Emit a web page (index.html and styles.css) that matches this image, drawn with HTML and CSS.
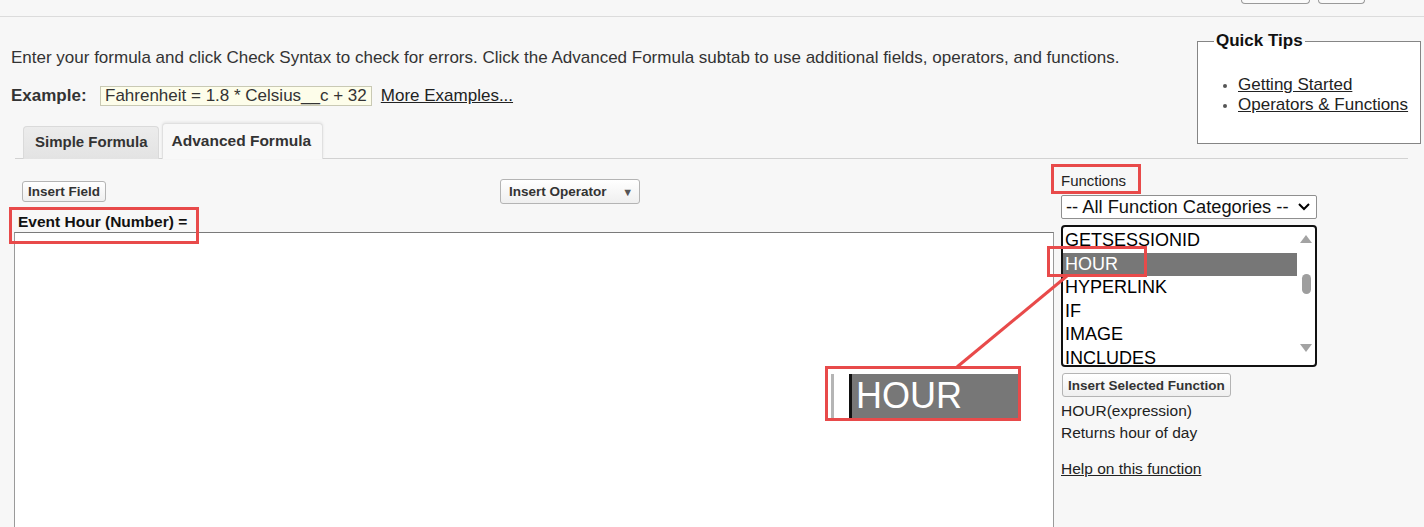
FILE: index.html
```html
<!DOCTYPE html>
<html>
  <head>
    <meta charset="UTF-8" />
    <title>Formula Editor</title>
    <link rel="stylesheet" href="styles.css">
  </head>
  <body>
    <div class="topbar">
      <span class="stub stub-wide"></span>
      <span class="stub stub-narrow"></span>
    </div>

    <div class="intro">
      <div class="intro-text">
        <p class="help">Enter your formula and click Check Syntax to check for errors. Click the Advanced Formula subtab to use additional fields, operators, and functions.</p>
        <div class="example">
          <span class="example-label">Example:</span>
          <span class="example-box">Fahrenheit = 1.8 * Celsius__c + 32</span>
          <a href="#" class="link">More Examples...</a>
        </div>
      </div>
      <fieldset class="tips">
        <legend>Quick Tips</legend>
        <ul>
          <li><a href="#" class="link">Getting Started</a></li>
          <li><a href="#" class="link">Operators &amp; Functions</a></li>
        </ul>
      </fieldset>
    </div>

    <div class="tabs">
      <div class="tab">Simple Formula</div>
      <div class="tab tab-active">Advanced Formula</div>
    </div>

    <div class="editor">
      <div class="editor-main">
        <div class="toolbar">
          <button class="btn btn-small">Insert Field</button>
          <button class="btn btn-operator">Insert Operator <span class="caret">&#9660;</span></button>
        </div>
        <div class="field-label">Event Hour (Number) =</div>
        <div class="formula-area"></div>
      </div>

      <div class="functions">
        <div class="functions-title">Functions</div>
        <div class="select">
          <span>-- All Function Categories --</span>
          <svg width="14" height="10" viewBox="0 0 14 10"><path d="M2 2 L7 7 L12 2" fill="none" stroke="#000" stroke-width="2"/></svg>
        </div>
        <div class="listbox">
          <ul class="options">
            <li>GETSESSIONID</li>
            <li class="selected">HOUR</li>
            <li>HYPERLINK</li>
            <li>IF</li>
            <li>IMAGE</li>
            <li>INCLUDES</li>
          </ul>
          <div class="scrollbar">
            <svg width="12" height="8" viewBox="0 0 12 8"><path d="M6 0 L12 8 L0 8 Z" fill="#a3a3a3"/></svg>
            <span class="thumb"></span>
            <svg width="12" height="8" viewBox="0 0 12 8"><path d="M0 0 L12 0 L6 8 Z" fill="#a3a3a3"/></svg>
          </div>
        </div>
        <button class="btn btn-insert">Insert Selected Function</button>
        <div class="fn-desc fn-first">HOUR(expression)</div>
        <div class="fn-desc">Returns hour of day</div>
        <a href="#" class="link fn-help">Help on this function</a>
      </div>
    </div>

    <!-- annotation overlay -->
    <div class="mark mark-label"></div>
    <div class="mark mark-functions"></div>
    <div class="mark mark-hour"></div>
    <svg class="connector" width="1424" height="527">
      <line x1="1067" y1="276" x2="957" y2="367" stroke="#e84a4a" stroke-width="3"/>
    </svg>
    <div class="callout">
      <span class="callout-edge"></span>
      <span class="callout-text">HOUR</span>
    </div>
  </body>
</html>
```

FILE: styles.css
```css
body {
  margin: 0;
  background: #f7f7f7;
  font-family: "Liberation Sans", Arial, sans-serif;
  color: #333;
  height: 527px;
  overflow: hidden;
}
.topbar {
  height: 16px;
  border-bottom: 1px solid #dcdcdc;
  display: flex;
  justify-content: flex-end;
  align-items: flex-start;
  gap: 8px;
  padding-right: 59px;
}
.stub {
  height: 3px;
  border: 1px solid #9a9a9a;
  border-top: none;
  border-radius: 0 0 4px 4px;
  background: #fafafa;
}
.stub-wide {
  width: 67px;
}
.stub-narrow {
  width: 45px;
}
.intro {
  display: flex;
  justify-content: space-between;
  align-items: flex-start;
  padding: 0 3px 0 11px;
}
.intro-text {
  padding-top: 31px;
}
.help {
  margin: 0;
  font-size: 17px;
  line-height: 20px;
}
.example {
  margin-top: 18px;
  display: flex;
  align-items: center;
  height: 20px;
  font-size: 17px;
}
.example-label {
  font-weight: bold;
  width: 89px;
}
.example-box {
  background: #fdfdea;
  border: 1px solid #c9c9b4;
  padding: 0 4px;
  line-height: 18px;
  color: #333;
}
.link {
  color: #222;
  text-decoration: underline;
}
.example .link {
  margin-left: 9px;
}
.tips {
  margin: 15px 0 -38px;
  width: 224px;
  box-sizing: border-box;
  border: 1px solid #858585;
  padding: 0 10px 28px 16px;
  background: #fff;
}
.tips legend {
  font-size: 17px;
  font-weight: bold;
  line-height: 18px;
  padding: 0 2px;
  color: #111;
}
.tips ul {
  margin: 25px 0 0;
  padding-left: 24px;
  font-size: 17px;
  line-height: 20px;
}
.tips li::marker {
  color: #555;
  font-size: 13px;
}
.tabs {
  margin: 17px 16px 0 15px;
  padding-left: 8px;
  height: 35px;
  border-bottom: 1px solid #d2d2d2;
  display: flex;
  align-items: flex-end;
  gap: 3px;
}
.tab {
  box-sizing: border-box;
  height: 33px;
  margin-bottom: -1px;
  padding: 0 10px 0 11px;
  font-size: 15px;
  font-weight: bold;
  line-height: 30px;
  color: #333;
  background: linear-gradient(#ececec, #e3e3e3);
  border: 1px solid #dadada;
  border-bottom: none;
  border-radius: 4px 4px 0 0;
}
.tab-active {
  width: 161px;
  height: 36px;
  line-height: 33px;
  padding: 0 0 0 9px;
  font-size: 15.5px;
  background: #f8f8f8;
  border-color: #e0e0e0;
  box-shadow: 0 -1px 3px rgba(0, 0, 0, 0.08);
}
.editor {
  display: flex;
  gap: 7px;
  padding-left: 14px;
}
.editor-main {
  width: 1040px;
}
.toolbar {
  display: flex;
  align-items: center;
  padding: 20px 0 0 8px;
  height: 25px;
}
.btn {
  font-family: "Liberation Sans", Arial, sans-serif;
  font-size: 13.5px;
  font-weight: bold;
  color: #333;
  background: linear-gradient(#ffffff, #efefef);
  border: 1px solid #b4b4b4;
  border-radius: 3px;
  padding: 0 4px;
}
.btn-small {
  height: 21px;
  width: 84px;
}
.btn-operator {
  height: 25px;
  width: 140px;
  margin-left: 394px;
  text-align: left;
  padding-left: 8px;
}
.caret {
  font-size: 11px;
  margin-left: 12px;
  color: #555;
}
.field-label {
  margin-top: 9px;
  padding-left: 4px;
  font-size: 15.5px;
  font-weight: bold;
  line-height: 18px;
  color: #111;
}
.formula-area {
  margin-top: 1px;
  height: 295px;
  background: #fff;
  border: 1px solid #9a9a9a;
  border-top-color: #7a7a7a;
  border-bottom: none;
}
.functions {
  width: 256px;
  padding-top: 13px;
  font-size: 15.5px;
  color: #222;
}
.functions-title {
  font-size: 15px;
  line-height: 18px;
}
.select {
  margin-top: 5px;
  box-sizing: border-box;
  height: 24px;
  border: 1px solid #8f8f8f;
  border-radius: 2px;
  background: #fff;
  display: flex;
  align-items: center;
  justify-content: space-between;
  padding: 0 5px 0 4px;
  font-size: 18.3px;
  color: #111;
}
.listbox {
  margin-top: 6px;
  box-sizing: border-box;
  height: 142px;
  border: 2px solid #111;
  border-radius: 4px;
  background: #fff;
  display: flex;
  overflow: hidden;
}
.options {
  flex: 1;
  list-style: none;
  margin: 2px 0 0;
  padding: 0;
  font-size: 18px;
  line-height: 23.5px;
  color: #000;
}
.options li {
  padding-left: 2px;
}
.options .selected {
  background: #777;
  color: #fff;
}
.scrollbar {
  width: 18px;
  display: flex;
  flex-direction: column;
  align-items: center;
  padding-top: 8px;
}
.thumb {
  width: 9px;
  height: 20px;
  border-radius: 5px;
  background: #9e9e9e;
  margin: 31px 0 50px;
}
.btn-insert {
  display: block;
  margin-top: 6px;
  margin-left: 1px;
  height: 24px;
  padding: 0 5px;
}
.fn-desc {
  line-height: 22px;
}
.fn-first {
  margin-top: 3px;
}
.fn-help {
  display: inline-block;
  margin-top: 14px;
  line-height: 22px;
}
/* annotations drawn over the screenshot */
.mark {
  position: absolute;
  box-sizing: border-box;
  border: 3px solid #e84a4a;
}
.mark-label {
  left: 9px;
  top: 207px;
  width: 190px;
  height: 37px;
}
.mark-functions {
  left: 1051px;
  top: 164px;
  width: 90px;
  height: 30px;
}
.mark-hour {
  left: 1047px;
  top: 246px;
  width: 100px;
  height: 31px;
}
.connector {
  position: absolute;
  left: 0;
  top: 0;
  pointer-events: none;
}
.callout {
  position: absolute;
  left: 825px;
  top: 366px;
  width: 196px;
  height: 55px;
  box-sizing: border-box;
  border: 3px solid #e84a4a;
  background: #fff;
  display: flex;
  align-items: stretch;
  padding: 5px 0 0 0;
}
.callout-edge {
  width: 21px;
  border-left: 3px solid #fff;
  box-shadow: inset 3px 0 0 #b5b5b5, inset -3px 0 0 #111;
}
.callout-text {
  flex: 1;
  background: #777;
  color: #fff;
  font-size: 36px;
  line-height: 44px;
  padding-left: 4px;
}
```
